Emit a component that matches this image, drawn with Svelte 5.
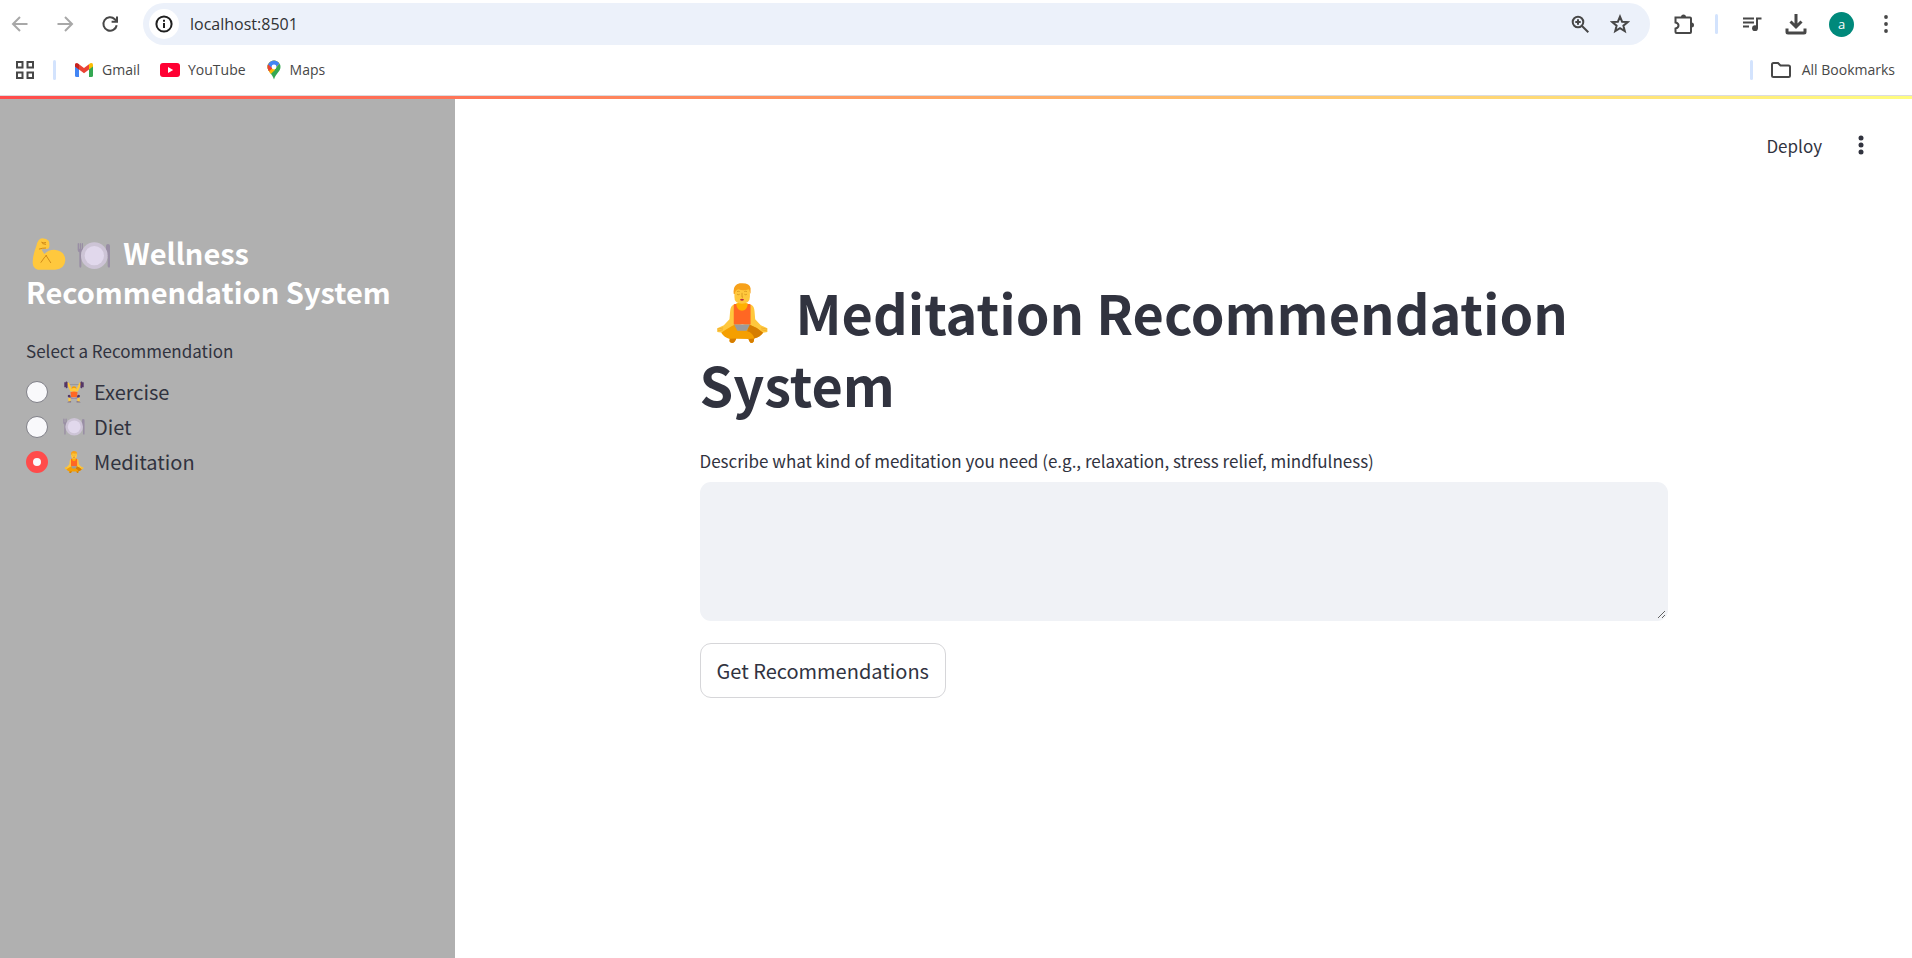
<script>
  let choice = $state('meditation');
  let prompt = $state('');
</script>

{#snippet plate(cls)}
  <svg class={cls} viewBox="232 60 100 84" aria-hidden="true">
    <path d="M233 66q0-3 2-3t2 3v14h2V66q0-3 2-3t2 3v14h2V66q0-3 2-3t2 3v17q0 6-5 8v42q0 4-3 4t-3-4V91q-5-2-5-8z" fill="#998ea4" />
    <path d="M318 72q0-6 6-6t6 6v61q0 4-3 4t-4-4v-27q-5-1-5-6z" fill="#998ea4" />
    <circle cx="283" cy="101" r="40" fill="#cdc4d6" />
    <circle cx="283" cy="101" r="29" fill="#e1d8ec" />
  </svg>
{/snippet}

{#snippet yoga(cls)}
  <svg class={cls} viewBox="76 40 156 182" aria-hidden="true">
    <path d="M128 106q-9 4-10 20l-2 24-17 18-20 9v12l20 3 36-20 20-8 20 8 36 20 20-3v-12l-20-9-17-18-2-24q-1-16-10-20z" fill="#ffc83d" />
    <path d="M91 191q24-17 42-25l21 12 22-12q23 8 42 25-8 12-27 17l-2 10q-2 4-7 4t-7-12l-39-1q-6 13-12 13t-8-5l1-7q-17-5-26-19z" fill="#f59f00" />
    <path d="M176 166q23 8 42 25-8 12-27 17-3-17-21-22zM117 209l20-1q-6 14-12 14t-9-5z" fill="#d67d00" />
    <path d="M173 210l18-2-1 9q-2 5-7 5t-10-12z" fill="#d67d00" />
    <path d="M129 106q0-2 3-2h45q3 0 3 2v60h-51z" fill="#ff6723" />
    <path d="M130 166h48l-10 19h-28z" fill="#9b9b9b" />
    <path d="M136 102q3 22 18 22t18-22l-9-2h-18z" fill="#ffb000" />
    <path d="M131 66q0-18 23-18t24 18v16q0 21-24 21t-23-21z" fill="#ffc83d" />
    <path d="M129 73q-4-27 18-32 30-3 33 15v17q-4-8-5-14-17 6-32 0-9 2-11 14z" fill="#f7a11a" />
    <path d="M139 74q4 3 8 0m14 0q4 3 8 0M139 66q4-2 8 0m14 0q4-2 8 0M154 70v13h3" fill="none" stroke="#c88717" stroke-width="2" />
    <path d="M148 89q6-2 12 0-1 5-6 5t-6-5z" fill="#b92b44" />
    <path d="M79 180l18-4m-17 9l16-3m134-2l-18-4m17 9l-16-3" stroke="#e9a225" stroke-width="2" />
  </svg>
{/snippet}

<div class="page">
  <header class="browser">
    <div class="toolbar">
      <div class="nav">
        <button class="icon dim" aria-label="Back"><svg viewBox="0 0 20 20"><path d="M17.5 10H4M10 3L3 10l7 7" /></svg></button>
        <button class="icon dim" aria-label="Forward"><svg viewBox="0 0 20 20"><path d="M2.500 10H16M10 3l7 7-7 7" /></svg></button>
        <button class="icon" aria-label="Reload"><svg viewBox="0 0 20 20"><path d="M16.700 11.200A6.700 6.700 0 1 1 14.800 5.200L16.500 7" /><path d="M17 2.500V7.800H11.600" /></svg></button>
      </div>
      <div class="address">
        <button class="info" aria-label="Site information"><svg viewBox="0 0 20 20"><circle cx="10" cy="10" r="7.600" /><path d="M10 9v5" /><path d="M10 5.800v2" /></svg></button>
        <input aria-label="Address" value="localhost:8501" />
        <button class="icon" aria-label="Zoom"><svg viewBox="0 0 20 20"><circle cx="8" cy="8" r="5.300" /><path d="M12 12l6.300 6.300M8 5.300v5.400M5.300 8h5.400" /></svg></button>
        <button class="icon" aria-label="Bookmark this tab"><svg viewBox="0 0 20 20"><path d="M10 2.600l2.100 5.100 5.700.4-4.400 3.600 1.400 5.500L10 14.200l-4.800 3 1.400-5.500-4.400-3.600 5.700-.4z" /></svg></button>
      </div>
      <div class="tools">
        <button class="icon wide" aria-label="Extensions"><svg viewBox="0 0 22 22"><path d="M2.500 4.500H17q1 0 1 1V19q0 1-1 1H3.500q-1 0-1-1v-3.500q3-.6 3-3t-3-3z" /><path d="M8 4a2.500 2.500 0 0 1 5 0zM18.500 9.500a2.500 2.500 0 0 1 0 5z" fill="currentColor" stroke="none" /></svg></button>
        <span class="bar"></span>
        <button class="icon wide" aria-label="Media controls"><svg viewBox="0 0 22 22"><path d="M2 5.500h11M2 9.500h11M2 13.500h6M16 15V5.500h4.500" /><circle cx="14" cy="15.200" r="2.900" fill="currentColor" stroke="none" /></svg></button>
        <button class="icon wide" aria-label="Downloads"><svg class="bold" viewBox="0 0 22 22"><path d="M11 1v13M5.500 8.500l5.500 5.500 5.500-5.500M2 15.500V19q0 1 1 1h16q1 0 1-1v-3.500" /></svg></button>
        <button class="avatar" aria-label="Profile">a</button>
        <button class="icon" aria-label="Browser menu"><svg viewBox="0 0 20 20"><g fill="currentColor" stroke="none"><circle cx="10" cy="3" r="1.900" /><circle cx="10" cy="10" r="1.900" /><circle cx="10" cy="17" r="1.900" /></g></svg></button>
      </div>
    </div>
    <nav class="bookmarks" aria-label="Bookmarks">
      <button class="icon" aria-label="Apps"><svg viewBox="0 0 20 20"><path d="M2 2h5.500v5.500H2zM12.500 2H18v5.500h-5.500zM2 12.500h5.500V18H2zM12.500 12.500H18V18h-5.500z" /></svg></button>
      <span class="bar"></span>
      <a href="#gmail">
        <svg class="mark" viewBox="0 0 20 16"><path d="M1 3v10.500Q1 15 2.500 15H5V6z" fill="#4285f4" /><path d="M15 6v9h2.500q1.500 0 1.500-1.500V3z" fill="#34a853" /><path d="M15 2.300V7.500l4-3V3q0-2-1.500-2T15 2.300z" fill="#fbbc04" /><path d="M1 3v1.500L10 11.300l5-3.800V2.300l-5 3.800-5-3.800Q3.500 1 2.300 1.200 1 1.500 1 3z" fill="#ea4335" /><path d="M1 3v1.500l4 3V2.300Q3.500 1 2.300 1.200 1 1.500 1 3z" fill="#c5221f" /></svg>
        Gmail
      </a>
      <a href="#youtube">
        <svg class="mark" viewBox="0 0 20 16"><rect y="1" width="20" height="14" rx="3" fill="#ff0033" /><path d="M8 5v6l5.200-3z" fill="#fff" /></svg>
        YouTube
      </a>
      <a href="#maps">
        <svg class="pin" viewBox="0 0 14 20"><clipPath id="pin"><path d="M7 .5A6.500 6.500 0 0 0 .5 7C.5 11.500 5 13 7 19.500 9 13 13.500 11.500 13.500 7A6.500 6.500 0 0 0 7 .5z" /></clipPath><g clip-path="url(#pin)"><path d="M0 0h14v20H0z" fill="#34a853" /><path d="M0 0h14v2L3 15 0 13z" fill="#fbbc04" /><path d="M0 3l8 5-6 5-3-3z" fill="#ea4335" /><path d="M0 3.500V0h14v2L7 9.500z" fill="#4285f4" /><path d="M8 10L0 17v-4l7-6z" fill="#fbbc04" /></g><circle cx="7" cy="7" r="2.400" fill="#fff" /></svg>
        Maps
      </a>
      <span class="bar end"></span>
      <a href="#all">
        <svg class="folder" viewBox="0 0 22 18"><path d="M2 3.500Q2 2 3.500 2H8l2.500 2.500h8Q20 4.500 20 6v8.500q0 1.500-1.500 1.500h-15Q2 16 2 14.500z" fill="none" stroke="#474747" stroke-width="2" /></svg>
        All Bookmarks
      </a>
    </nav>
  </header>

  <div class="app">
    <aside>
      <h2>
        <svg class="arm" viewBox="95 55 102 96" aria-hidden="true">
          <path d="M97 128q0-20 11-49 5-23 18-23 13 1 19 7 3 5 2 18-1 8-10 7l-14 1q4 7 9 14 12-13 30-13 32 3 33 32-2 26-30 28h-52q-16-3-16-22z" fill="#ffc83d" />
          <path d="M117 88q8-3 19-3M124 68q6 3 12 1m-9 3l9 2M122 128l12-17 4-3M137 107l14 22" fill="none" stroke="#c87f12" stroke-width="2.500" stroke-linecap="round" />
        </svg>
        {@render plate('dish')}
        Wellness Recommendation System
      </h2>
      <fieldset>
        <legend>Select a Recommendation</legend>
        <label>
          <input type="radio" name="kind" value="exercise" bind:group={choice} />
          <svg class="mini" viewBox="190 482 64 68" aria-hidden="true">
            <path d="M196 493h52" stroke="#8b8b95" stroke-width="2" />
            <path d="M204 490l9 21h19l9-21" fill="none" stroke="#ffc83d" stroke-width="7" stroke-linecap="round" />
            <circle cx="222" cy="508" r="8" fill="#ffc83d" />
            <path d="M214 505q1-7 8-7t8 7q-8-3-16 0z" fill="#f59f00" />
            <path d="M211 517q11-5 22 0l-2 15h-18z" fill="#ff6723" />
            <path d="M211 531q11 8 22 0l3 4q-14 6-28 0z" fill="#9a8cab" />
            <path d="M208 534v11m28-11v11" stroke="#ffc83d" stroke-width="7" />
            <path d="M192 486h5v-3l5 2v18l-5 2v-4h-5zM252 486h-5v-3l-5 2v18l5 2v-4h5zM203 526q8-4 9 6-7 3-9-1zM240 526q-8-4-9 6 7 3 9-1zM201 548q1-3 12-3v3zM230 548v-3q11 0 13 3z" fill="#533566" />
          </svg>
          Exercise
        </label>
        <label>
          <input type="radio" name="kind" value="diet" bind:group={choice} />
          {@render plate('mini')}
          Diet
        </label>
        <label>
          <input type="radio" name="kind" value="meditation" bind:group={choice} />
          {@render yoga('mini')}
          Meditation
        </label>
      </fieldset>
    </aside>

    <main>
      <div class="actions">
        <button class="deploy">Deploy</button>
        <button class="kebab" aria-label="App menu"><svg viewBox="0 0 6 20"><circle cx="3" cy="3" r="2.500" /><circle cx="3" cy="10" r="2.500" /><circle cx="3" cy="17" r="2.500" /></svg></button>
      </div>
      <div class="column">
        <h1>{@render yoga('hero')}Meditation Recommendation System</h1>
        <label class="caption" for="prompt">Describe what kind of meditation you need (e.g., relaxation, stress relief, mindfulness)</label>
        <div class="field">
          <textarea id="prompt" bind:value={prompt}></textarea>
        </div>
        <button class="submit">Get Recommendations</button>
      </div>
    </main>
  </div>
</div>

<style>
  :global(body) { margin: 0; background: #fff; }
  * { box-sizing: border-box; }
  .page {
    min-height: 100vh;
    display: flex;
    flex-direction: column;
    color: #31333f;
    font-family: "Noto Sans CJK SC", "Noto Sans", sans-serif;
  }
  button, input, textarea { font: inherit; color: inherit; }
  button { border: 0; padding: 0; background: none; }
  svg { display: block; flex: none; }

  .browser {
    height: 96px;
    padding-top: 3px;
    border-bottom: 1px solid #dcdce0;
    color: #474747;
    font-family: "Open Sans", sans-serif;
  }
  .toolbar { display: flex; align-items: center; height: 42px; }
  .nav { display: flex; gap: 25px; padding-left: 10px; width: 143px; }
  .icon { width: 20px; height: 20px; color: #474747; }
  .icon svg { width: 100%; height: 100%; fill: none; stroke: currentColor; stroke-width: 2; }
  .icon .bold { stroke-width: 3; }
  .dim { color: #a8a8a8; }
  .wide { width: 22px; height: 22px; }
  .address {
    flex: 1;
    display: flex;
    align-items: center;
    gap: 20px;
    height: 42px;
    padding: 0 20px 0 6px;
    border-radius: 21px;
    background: #ecf1fa;
  }
  .info {
    display: grid;
    place-items: center;
    width: 30px;
    height: 30px;
    border-radius: 50%;
    background: #fff;
  }
  .info svg { width: 20px; height: 20px; fill: none; stroke: #1f1f1f; stroke-width: 2; }
  .address input {
    flex: 1;
    min-width: 0;
    margin-left: -9px;
    padding: 0;
    border: 0;
    outline: 0;
    background: none;
    color: #303134;
    font-size: 16px;
  }
  .tools { display: flex; align-items: center; gap: 22px; padding: 0 16px 0 23px; }
  .bar { width: 3px; height: 20px; border-radius: 2px; background: #d3e3fd; }
  .tools .bar { margin: 0 1px 0 -2px; }
  .avatar {
    width: 25px;
    height: 25px;
    border-radius: 50%;
    background: #00897b;
    color: #fff;
    font-size: 13px;
    line-height: 24px;
  }

  .bookmarks { display: flex; align-items: center; height: 49px; padding: 0 17px 0 15px; }
  .bookmarks .bar { margin: 0 18px; }
  .bookmarks .end { margin: 0 17px 0 auto; }
  .bookmarks a {
    display: flex;
    align-items: center;
    gap: 8px;
    margin-right: 20px;
    color: #474747;
    font-size: 14px;
    text-decoration: none;
  }
  .bookmarks a:last-child { gap: 10px; margin-right: 0; }
  .mark { width: 20px; height: 16px; }
  .pin { width: 16px; height: 20px; }
  .folder { width: 22px; height: 18px; }

  .app { position: relative; flex: 1; display: flex; }
  .app::before {
    content: "";
    position: absolute;
    inset: 0 0 auto;
    height: 3px;
    background: linear-gradient(90deg, #ff4b4b, #fffd80);
  }
  aside { width: 455px; padding: 137px 26px 0; background: #b0b0b0; }
  h2 {
    margin: 0;
    color: #fff;
    font-size: 29px;
    font-weight: 600;
    line-height: 39px;
  }
  h2 svg { display: inline-block; vertical-align: -5px; }
  .arm { width: 34px; height: 32px; margin-left: 6px; }
  h2 :global(.dish) { width: 34px; height: 28px; margin: 0 6px 0 4px; }
  fieldset { margin: 0; padding: 0; border: 0; }
  legend { padding: 27px 0 10px; font-size: 17px; line-height: 26px; }
  fieldset label { display: flex; align-items: center; height: 35px; font-size: 20px; }
  input[type="radio"] {
    appearance: none;
    width: 22px;
    height: 22px;
    margin: 0 15px 0 0;
    border: 1px solid #808088;
    border-radius: 50%;
    background: #f9f9fb;
  }
  input[type="radio"]:checked { border: 7px solid #ff4b4b; }
  .mini { width: 22px; height: 22px; margin-right: 9px; }

  main { flex: 1; min-width: 0; }
  .actions { display: flex; justify-content: flex-end; align-items: center; height: 98px; padding-right: 48px; gap: 36px; }
  .deploy { font-size: 17px; }
  .kebab svg { width: 6px; height: 20px; fill: #31333f; }
  .column { max-width: 968px; margin: 82px auto 0; }
  h1 { margin: 0; font-size: 54px; font-weight: 700; line-height: 72px; }
  h1 svg { display: inline-block; vertical-align: -8px; width: 52px; height: 60px; margin: 0 28px 0 16px; }
  .caption { display: block; padding: 28px 0 8px; font-size: 17px; line-height: 26px; }
  .field { border-radius: 11px; background: #f0f2f6; overflow: hidden; }
  textarea { display: block; width: 100%; height: 139px; padding: 16px; border: 2px solid transparent; outline: 0; background: none; resize: vertical; }
  .submit {
    height: 55px;
    margin-top: 22px;
    padding: 0 16px;
    border: 1px solid #d6d6d9;
    border-radius: 11px;
    background: #fff;
    font-size: 20px;
  }
</style>
